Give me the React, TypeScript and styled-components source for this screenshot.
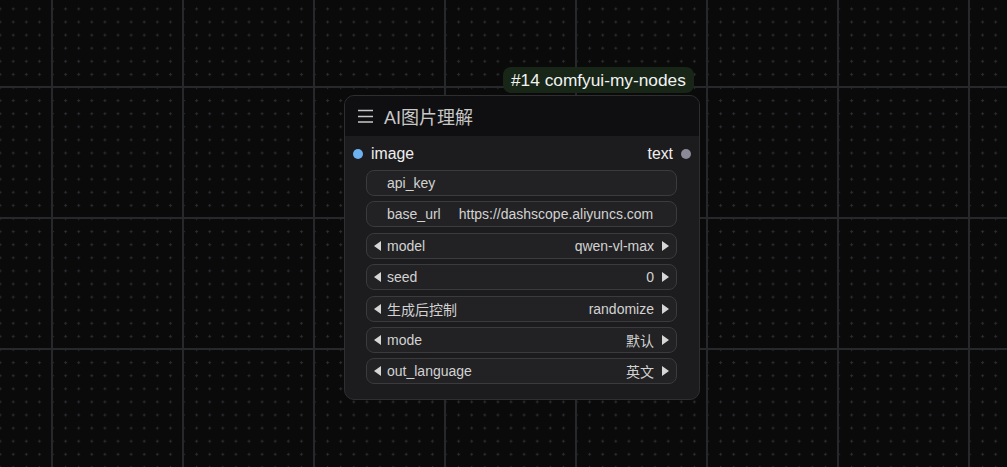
import React from "react";
import styled, { createGlobalStyle } from "styled-components";

const Global = createGlobalStyle`
  html, body { margin: 0; padding: 0; background: #0a0a0a; }
  body { font-family: "Liberation Sans", Arial, "Noto Sans CJK SC", sans-serif; }
`;

const Canvas = styled.div`
  position: relative;
  width: 1007px;
  height: 467px;
  overflow: hidden;
  background: #0a0a0a;
`;

const GridSvg = styled.svg`
  position: absolute;
  inset: 0;
`;

const Node = styled.div`
  position: absolute;
  left: 344px;
  top: 95px;
  width: 356px;
  height: 305px;
  box-sizing: border-box;
  background: #1c1c1e;
  border: 1px solid #2e2e31;
  border-radius: 10px;
  display: flex;
  flex-direction: column;
  overflow: hidden;
`;

const Badge = styled.div`
  position: absolute;
  left: 503px;
  top: 67px;
  height: 26px;
  padding: 0 8px;
  box-sizing: border-box;
  display: flex;
  align-items: center;
  background: #172617;
  border-radius: 8px;
  color: #f2f2f2;
  font-size: 17.3px;
  white-space: nowrap;
`;

const TitleBar = styled.div`
  height: 40px;
  flex: none;
  background: #0f0f11;
  display: flex;
  align-items: center;
  gap: 11px;
  padding-left: 12px;
  padding-bottom: 1px;
  box-sizing: border-box;
`;

const Title = styled.div`
  color: #c8c8c8;
  font-size: 18px;
  font-family: "Liberation Sans", Arial, "Noto Sans CJK SC", sans-serif;
`;

const SlotRow = styled.div`
  height: 34px;
  display: flex;
  align-items: center;
  justify-content: space-between;
  padding: 2px 8px 0 8px;
  box-sizing: border-box;
`;

const Slot = styled.div`
  display: flex;
  align-items: center;
  gap: 8px;
  color: #eeeeee;
  font-size: 15.8px;
`;

const Dot = styled.span<{ $color: string }>`
  width: 10px;
  height: 10px;
  border-radius: 50%;
  background: ${(p) => p.$color};
  display: inline-block;
`;

const Widgets = styled.div`
  display: flex;
  flex-direction: column;
  gap: 5.4px;
  padding: 0 22px 0 21px;
`;

const Widget = styled.div`
  height: 26px;
  box-sizing: border-box;
  border: 1px solid #3b3b3e;
  border-radius: 8px;
  background: #222224;
  display: flex;
  align-items: center;
  padding: 0 7px;
  color: #d2d2d2;
  font-size: 14px;
  font-family: "Liberation Sans", Arial, "Noto Sans CJK SC", sans-serif;
`;

const Arrow = styled.span<{ $dir: "l" | "r" }>`
  width: 0;
  height: 0;
  border-top: 5px solid transparent;
  border-bottom: 5px solid transparent;
  ${(p) =>
    p.$dir === "l"
      ? "border-right: 7px solid #d6d6d6; margin-right: 6px;"
      : "border-left: 7px solid #d6d6d6; margin-left: 8px;"}
`;

const Label = styled.span<{ $pad?: boolean }>`
  padding-left: ${(p) => (p.$pad ? "13px" : "0")};
  white-space: nowrap;
`;

const Value = styled.span<{ $left?: boolean }>`
  margin-left: ${(p) => (p.$left ? "18px" : "auto")};
  white-space: nowrap;
`;

const Menu = () => (
  <svg width="16" height="14" viewBox="0 0 16 14">
    <g stroke="#c8c8c8" strokeWidth="1.5">
      <line x1="1" y1="1.5" x2="16" y2="1.5" />
      <line x1="1" y1="7.5" x2="16" y2="7.5" />
      <line x1="1" y1="13" x2="16" y2="13" />
    </g>
  </svg>
);

const combos: [string, string][] = [
  ["model", "qwen-vl-max"],
  ["seed", "0"],
  ["生成后控制", "randomize"],
  ["mode", "默认"],
  ["out_language", "英文"],
];

export default function App() {
  return (
    <>
      <Global />
      <Canvas>
        <GridSvg width="1007" height="467">
          <defs>
            <pattern id="dots" x="52" y="87" width="13.1" height="13.1" patternUnits="userSpaceOnUse">
              <rect x="0" y="-1" width="1" height="3" fill="#2b2c31" />
              <rect x="-1" y="0" width="3" height="1" fill="#2b2c31" />
              <rect x="13.1" y="-1" width="1" height="3" fill="#2b2c31" />
              <rect x="12.1" y="0" width="3" height="1" fill="#2b2c31" />
              <rect x="0" y="12.1" width="1" height="3" fill="#2b2c31" />
              <rect x="-1" y="13.1" width="3" height="1" fill="#2b2c31" />
            </pattern>
          </defs>
          <rect width="1007" height="467" fill="url(#dots)" />
          {[51, 182, 313, 444, 575, 706, 837, 968].map((x) => (
            <rect key={"v" + x} x={x} y={0} width={2} height={467} fill="#26282c" />
          ))}
          {[86, 217, 348].map((y) => (
            <rect key={"h" + y} x={0} y={y} width={1007} height={2} fill="#26282c" />
          ))}
        </GridSvg>
        <Badge>#14 comfyui-my-nodes</Badge>
        <Node>
          <TitleBar>
            <Menu />
            <Title>AI图片理解</Title>
          </TitleBar>
          <SlotRow>
            <Slot>
              <Dot $color="#6cb2f0" />
              image
            </Slot>
            <Slot>
              text
              <Dot $color="#8b8a96" />
            </Slot>
          </SlotRow>
          <Widgets>
            <Widget>
              <Label $pad>api_key</Label>
            </Widget>
            <Widget>
              <Label $pad>base_url</Label>
              <Value $left>https://dashscope.aliyuncs.com</Value>
            </Widget>
            {combos.map(([k, v]) => (
              <Widget key={k}>
                <Arrow $dir="l" />
                <Label>{k}</Label>
                <Value>{v}</Value>
                <Arrow $dir="r" />
              </Widget>
            ))}
          </Widgets>
        </Node>
      </Canvas>
    </>
  );
}
